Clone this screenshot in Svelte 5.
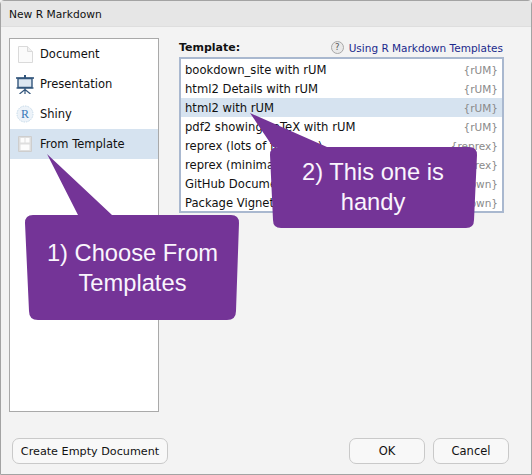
<script>
	const kinds = ['Document', 'Presentation', 'Shiny', 'From Template']

	const templates = [
		{name: 'bookdown_site with rUM', pkg: '{rUM}'},
		{name: 'html2 Details with rUM', pkg: '{rUM}'},
		{name: 'html2 with rUM', pkg: '{rUM}'},
		{name: 'pdf2 showing LaTeX with rUM', pkg: '{rUM}'},
		{name: 'reprex (lots of features)', pkg: '{reprex}'},
		{name: 'reprex (minimal)', pkg: '{reprex}'},
		{name: 'GitHub Document (Markdown)', pkg: '{rmarkdown}'},
		{name: 'Package Vignette (HTML)', pkg: '{rmarkdown}'}
	]
</script>

<div class="window">
	<header>New R Markdown</header>

	<div class="body">
		<ul class="kinds">
			{#each kinds as kind (kind)}
				<li class:active={kind === 'From Template'}>
					<span class="icon">
						{#if kind === 'Document'}
							<svg width="15" height="17" viewBox="0 0 15 17">
								<path d="M.5.5h9l5 5v11H.5z" fill="#fbfbfb" stroke="#dadada" />
								<path d="M9.5.5v5h5" fill="#f0f0f0" stroke="#dadada" />
							</svg>
						{:else if kind === 'Presentation'}
							<svg width="18" height="19" viewBox="0 0 18 19">
								<path d="M0 3h18" stroke="#33567c" stroke-width="1.6" />
								<path d="M8 0h2v3H8z" fill="#33567c" />
								<path d="M2 3.5h14v9H2z" fill="#dce7f1" stroke="#33567c" stroke-width="1.4" />
								<path d="M.5 13h17" stroke="#33567c" stroke-width="1.4" />
								<path d="M9 13v6M9 14.5L3.5 19M9 14.5l5.5 4.5" stroke="#33567c" stroke-width="1.2" fill="none" />
							</svg>
						{:else if kind === 'Shiny'}
							<svg width="18" height="18" viewBox="0 0 18 18">
								<circle cx="9" cy="9" r="8" fill="#edf3f9" stroke="#c5d9e9" stroke-dasharray="1.5 1" />
								<text x="9" y="13" text-anchor="middle" class="r">R</text>
							</svg>
						{:else}
							<svg width="14" height="16" viewBox="0 0 14 16">
								<path d="M.5.5h13v15H.5z" fill="#dedede" stroke="#cecece" />
								<path d="M2.5 2h4v4.5h-4zM7.5 2h4v4.5h-4zM2.5 8.5h9V14h-9z" fill="#fcfcfc" />
							</svg>
						{/if}
					</span>
					{kind}
				</li>
			{/each}
		</ul>

		<section class="picker">
			<div class="picker-head">
				<strong>Template:</strong>
				<span class="help"><span class="q">?</span><span class="link">Using R Markdown Templates</span></span>
			</div>
			<ul class="templates">
				{#each templates as t (t.name)}
					<li class:active={t.name === 'html2 with rUM'}>
						<span>{t.name}</span>
						<span class="pkg">{t.pkg}</span>
					</li>
				{/each}
			</ul>
		</section>
	</div>

	<footer>
		<button class="wide">Create Empty Document</button>
		<span class="spacer"></span>
		<button>OK</button>
		<button>Cancel</button>
	</footer>

	<svg class="callouts" width="532" height="475" viewBox="0 0 532 475">
		<path
			class="bubble"
			d="M47 154 L78 215 H33 Q25 215 25 223 L29 311 Q29 320 38 320 H227 Q236 320 236 311 L239 223 Q239 215 231 215 H112 Z"
		/>
		<path
			class="bubble"
			d="M250 113 L273 147 H278 Q270 147 270 155 L273 220 Q273 228 281 228 H466 Q474 228 474 220 L477 155 Q477 147 469 147 H327 Z"
		/>
		<text x="132.5" y="261" text-anchor="middle">1) Choose From</text>
		<text x="132.5" y="291" text-anchor="middle">Templates</text>
		<text x="373" y="180" text-anchor="middle">2) This one is</text>
		<text x="373" y="210" text-anchor="middle">handy</text>
	</svg>
</div>

<style>
	:global(body) {
		background: #f3f3f3;
	}

	.window {
		position: relative;
		box-sizing: border-box;
		width: 532px;
		height: 475px;
		display: flex;
		flex-direction: column;
		background: #f3f3f3;
		border: 1px solid #a3a3a3;
		border-top-left-radius: 4px;
		border-top-right-radius: 4px;
		font-family: 'DejaVu Sans', sans-serif;
		font-size: 11.5px;
		color: #111;
	}

	header {
		height: 25px;
		line-height: 27px;
		padding-left: 8px;
		background: #e6e6e6;
		border-bottom: 1px solid #dedede;
		font-size: 10.7px;
	}

	.body {
		display: flex;
		padding-top: 12px;
		padding-left: 8px;
		gap: 20px;
		margin-top: -1px;
	}

	ul {
		list-style: none;
		margin: 0;
		padding: 0;
	}

	.kinds {
		box-sizing: border-box;
		width: 150px;
		height: 374px;
		background: #fff;
		border: 1px solid #a9a9a9;
	}

	.kinds li {
		height: 30px;
		display: flex;
		align-items: center;
		gap: 5px;
	}

	.kinds li.active {
		background: #d6e3f0;
	}

	.icon {
		width: 20px;
		margin-left: 5px;
		display: flex;
		justify-content: center;
		align-items: center;
	}

	.r {
		font-family: 'Liberation Serif', serif;
		font-size: 12px;
		fill: #3a7ab8;
	}

	.picker {
		width: 325px;
	}

	.picker-head {
		height: 19px;
		display: flex;
		justify-content: space-between;
		align-items: center;
	}

	.picker-head strong {
		font-size: 11px;
	}

	.help {
		display: flex;
		align-items: center;
		gap: 5px;
		margin-right: 1px;
	}

	.q {
		box-sizing: border-box;
		width: 13px;
		height: 13px;
		border-radius: 50%;
		border: 1px solid #a8a8a8;
		background: #e9e9e9;
		color: #555;
		font-size: 8.5px;
		line-height: 11px;
		text-align: center;
	}

	.link {
		color: #1b2a8c;
		font-size: 10.5px;
	}

	.templates {
		box-sizing: border-box;
		height: 156px;
		background: #fff;
		border: 2px solid #a9b8cf;
		padding-top: 1px;
	}

	.templates li {
		height: 19px;
		display: flex;
		justify-content: space-between;
		align-items: center;
		padding: 0 4px;
		font-size: 11.6px;
	}

	.templates li.active {
		background: #d6e3f0;
	}

	.pkg {
		color: #8a8a8a;
		font-size: 10.5px;
	}

	footer {
		margin-top: auto;
		display: flex;
		gap: 8px;
		padding: 0 22px 10px 11px;
	}

	.spacer {
		flex: 1;
	}

	button {
		box-sizing: border-box;
		width: 76px;
		height: 26px;
		padding: 0;
		background: #f8f8f8;
		border: 1px solid #c9c9c9;
		border-radius: 7px;
		font: inherit;
		color: #111;
	}

	button.wide {
		width: 156px;
		font-size: 11.2px;
	}

	.callouts {
		position: absolute;
		left: -1px;
		top: -1px;
	}

	.bubble {
		fill: #743497;
	}

	.callouts text {
		font-family: 'Liberation Sans', Arial, sans-serif;
		font-size: 23.7px;
		fill: #faf5fd;
	}
</style>
